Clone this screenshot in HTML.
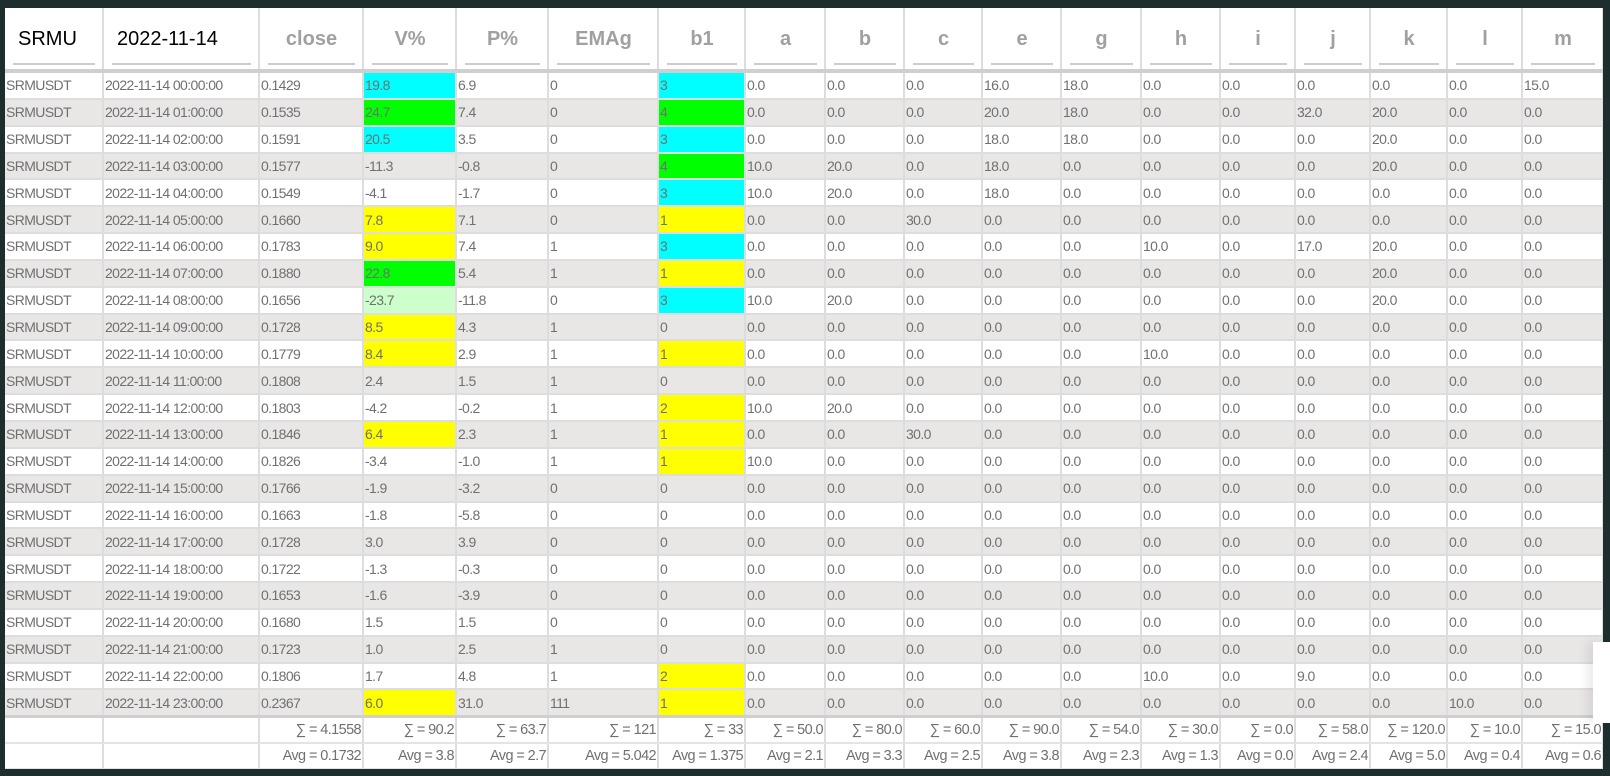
<!DOCTYPE html>
<html><head><meta charset="utf-8"><style>
body{margin:0;background:#1e2e2f;width:1610px;height:776px;overflow:hidden;font-family:"Liberation Sans",sans-serif}
.wrap{position:absolute;left:5px;top:8px;width:1598px;height:761px;background:#fff;overflow:hidden}
table{border-collapse:collapse;table-layout:fixed;width:1598px}
td,th{padding:0 0 0 1px;white-space:nowrap;overflow:hidden;border-right:2px solid #ddd;font-size:14px;color:#707070;letter-spacing:-0.6px;text-align:left}
thead th{height:61px;font-size:20px;font-weight:bold;color:#a0a0a0;text-align:center;position:relative;border-bottom:4px solid #cfcfcf;letter-spacing:0;vertical-align:top}
thead th span{display:block;margin:0 7px;padding-top:20px;height:35px;border-bottom:2px solid #ccc}
thead th.k{color:#000;text-align:left;font-weight:normal}
thead th.k span{padding-left:5px}
tbody td{height:24.85px;border-bottom:2px solid #ddd}
tbody tr:nth-child(even) td{background:#e9e6e6}
td.cy{background:#0ff!important}td.gr{background:#0f0!important}td.lg{background:#cfc!important}td.y{background:#ff0!important}
tbody tr:last-child td{border-bottom:3px solid #cfcfcf}
tfoot td{height:24px;text-align:right;border-bottom:2px solid #e4e4e4;padding-right:1px;font-size:14.5px}
.ov{position:absolute;left:1593px;top:642px;width:17px;height:81px;background:#fff;box-shadow:-6px 0 10px rgba(0,0,0,0.08)}
</style></head><body><div class="wrap"><table>
<colgroup><col style="width:98px"><col style="width:156px"><col style="width:104px"><col style="width:93px"><col style="width:92px"><col style="width:110px"><col style="width:87px"><col style="width:80px"><col style="width:79px"><col style="width:78px"><col style="width:79px"><col style="width:80px"><col style="width:79px"><col style="width:75px"><col style="width:75px"><col style="width:77px"><col style="width:75px"><col style="width:81px"></colgroup>
<thead><tr><th class="k"><span>SRMU</span></th><th class="k"><span>2022-11-14</span></th><th><span>close</span></th><th><span>V%</span></th><th><span>P%</span></th><th><span>EMAg</span></th><th><span>b1</span></th><th><span>a</span></th><th><span>b</span></th><th><span>c</span></th><th><span>e</span></th><th><span>g</span></th><th><span>h</span></th><th><span>i</span></th><th><span>j</span></th><th><span>k</span></th><th><span>l</span></th><th><span>m</span></th></tr></thead>
<tbody>
<tr><td>SRMUSDT</td><td>2022-11-14 00:00:00</td><td>0.1429</td><td class="cy">19.8</td><td>6.9</td><td>0</td><td class="cy">3</td><td>0.0</td><td>0.0</td><td>0.0</td><td>16.0</td><td>18.0</td><td>0.0</td><td>0.0</td><td>0.0</td><td>0.0</td><td>0.0</td><td>15.0</td></tr>
<tr><td>SRMUSDT</td><td>2022-11-14 01:00:00</td><td>0.1535</td><td class="gr">24.7</td><td>7.4</td><td>0</td><td class="gr">4</td><td>0.0</td><td>0.0</td><td>0.0</td><td>20.0</td><td>18.0</td><td>0.0</td><td>0.0</td><td>32.0</td><td>20.0</td><td>0.0</td><td>0.0</td></tr>
<tr><td>SRMUSDT</td><td>2022-11-14 02:00:00</td><td>0.1591</td><td class="cy">20.5</td><td>3.5</td><td>0</td><td class="cy">3</td><td>0.0</td><td>0.0</td><td>0.0</td><td>18.0</td><td>18.0</td><td>0.0</td><td>0.0</td><td>0.0</td><td>20.0</td><td>0.0</td><td>0.0</td></tr>
<tr><td>SRMUSDT</td><td>2022-11-14 03:00:00</td><td>0.1577</td><td>-11.3</td><td>-0.8</td><td>0</td><td class="gr">4</td><td>10.0</td><td>20.0</td><td>0.0</td><td>18.0</td><td>0.0</td><td>0.0</td><td>0.0</td><td>0.0</td><td>20.0</td><td>0.0</td><td>0.0</td></tr>
<tr><td>SRMUSDT</td><td>2022-11-14 04:00:00</td><td>0.1549</td><td>-4.1</td><td>-1.7</td><td>0</td><td class="cy">3</td><td>10.0</td><td>20.0</td><td>0.0</td><td>18.0</td><td>0.0</td><td>0.0</td><td>0.0</td><td>0.0</td><td>0.0</td><td>0.0</td><td>0.0</td></tr>
<tr><td>SRMUSDT</td><td>2022-11-14 05:00:00</td><td>0.1660</td><td class="y">7.8</td><td>7.1</td><td>0</td><td class="y">1</td><td>0.0</td><td>0.0</td><td>30.0</td><td>0.0</td><td>0.0</td><td>0.0</td><td>0.0</td><td>0.0</td><td>0.0</td><td>0.0</td><td>0.0</td></tr>
<tr><td>SRMUSDT</td><td>2022-11-14 06:00:00</td><td>0.1783</td><td class="y">9.0</td><td>7.4</td><td>1</td><td class="cy">3</td><td>0.0</td><td>0.0</td><td>0.0</td><td>0.0</td><td>0.0</td><td>10.0</td><td>0.0</td><td>17.0</td><td>20.0</td><td>0.0</td><td>0.0</td></tr>
<tr><td>SRMUSDT</td><td>2022-11-14 07:00:00</td><td>0.1880</td><td class="gr">22.8</td><td>5.4</td><td>1</td><td class="y">1</td><td>0.0</td><td>0.0</td><td>0.0</td><td>0.0</td><td>0.0</td><td>0.0</td><td>0.0</td><td>0.0</td><td>20.0</td><td>0.0</td><td>0.0</td></tr>
<tr><td>SRMUSDT</td><td>2022-11-14 08:00:00</td><td>0.1656</td><td class="lg">-23.7</td><td>-11.8</td><td>0</td><td class="cy">3</td><td>10.0</td><td>20.0</td><td>0.0</td><td>0.0</td><td>0.0</td><td>0.0</td><td>0.0</td><td>0.0</td><td>20.0</td><td>0.0</td><td>0.0</td></tr>
<tr><td>SRMUSDT</td><td>2022-11-14 09:00:00</td><td>0.1728</td><td class="y">8.5</td><td>4.3</td><td>1</td><td>0</td><td>0.0</td><td>0.0</td><td>0.0</td><td>0.0</td><td>0.0</td><td>0.0</td><td>0.0</td><td>0.0</td><td>0.0</td><td>0.0</td><td>0.0</td></tr>
<tr><td>SRMUSDT</td><td>2022-11-14 10:00:00</td><td>0.1779</td><td class="y">8.4</td><td>2.9</td><td>1</td><td class="y">1</td><td>0.0</td><td>0.0</td><td>0.0</td><td>0.0</td><td>0.0</td><td>10.0</td><td>0.0</td><td>0.0</td><td>0.0</td><td>0.0</td><td>0.0</td></tr>
<tr><td>SRMUSDT</td><td>2022-11-14 11:00:00</td><td>0.1808</td><td>2.4</td><td>1.5</td><td>1</td><td>0</td><td>0.0</td><td>0.0</td><td>0.0</td><td>0.0</td><td>0.0</td><td>0.0</td><td>0.0</td><td>0.0</td><td>0.0</td><td>0.0</td><td>0.0</td></tr>
<tr><td>SRMUSDT</td><td>2022-11-14 12:00:00</td><td>0.1803</td><td>-4.2</td><td>-0.2</td><td>1</td><td class="y">2</td><td>10.0</td><td>20.0</td><td>0.0</td><td>0.0</td><td>0.0</td><td>0.0</td><td>0.0</td><td>0.0</td><td>0.0</td><td>0.0</td><td>0.0</td></tr>
<tr><td>SRMUSDT</td><td>2022-11-14 13:00:00</td><td>0.1846</td><td class="y">6.4</td><td>2.3</td><td>1</td><td class="y">1</td><td>0.0</td><td>0.0</td><td>30.0</td><td>0.0</td><td>0.0</td><td>0.0</td><td>0.0</td><td>0.0</td><td>0.0</td><td>0.0</td><td>0.0</td></tr>
<tr><td>SRMUSDT</td><td>2022-11-14 14:00:00</td><td>0.1826</td><td>-3.4</td><td>-1.0</td><td>1</td><td class="y">1</td><td>10.0</td><td>0.0</td><td>0.0</td><td>0.0</td><td>0.0</td><td>0.0</td><td>0.0</td><td>0.0</td><td>0.0</td><td>0.0</td><td>0.0</td></tr>
<tr><td>SRMUSDT</td><td>2022-11-14 15:00:00</td><td>0.1766</td><td>-1.9</td><td>-3.2</td><td>0</td><td>0</td><td>0.0</td><td>0.0</td><td>0.0</td><td>0.0</td><td>0.0</td><td>0.0</td><td>0.0</td><td>0.0</td><td>0.0</td><td>0.0</td><td>0.0</td></tr>
<tr><td>SRMUSDT</td><td>2022-11-14 16:00:00</td><td>0.1663</td><td>-1.8</td><td>-5.8</td><td>0</td><td>0</td><td>0.0</td><td>0.0</td><td>0.0</td><td>0.0</td><td>0.0</td><td>0.0</td><td>0.0</td><td>0.0</td><td>0.0</td><td>0.0</td><td>0.0</td></tr>
<tr><td>SRMUSDT</td><td>2022-11-14 17:00:00</td><td>0.1728</td><td>3.0</td><td>3.9</td><td>0</td><td>0</td><td>0.0</td><td>0.0</td><td>0.0</td><td>0.0</td><td>0.0</td><td>0.0</td><td>0.0</td><td>0.0</td><td>0.0</td><td>0.0</td><td>0.0</td></tr>
<tr><td>SRMUSDT</td><td>2022-11-14 18:00:00</td><td>0.1722</td><td>-1.3</td><td>-0.3</td><td>0</td><td>0</td><td>0.0</td><td>0.0</td><td>0.0</td><td>0.0</td><td>0.0</td><td>0.0</td><td>0.0</td><td>0.0</td><td>0.0</td><td>0.0</td><td>0.0</td></tr>
<tr><td>SRMUSDT</td><td>2022-11-14 19:00:00</td><td>0.1653</td><td>-1.6</td><td>-3.9</td><td>0</td><td>0</td><td>0.0</td><td>0.0</td><td>0.0</td><td>0.0</td><td>0.0</td><td>0.0</td><td>0.0</td><td>0.0</td><td>0.0</td><td>0.0</td><td>0.0</td></tr>
<tr><td>SRMUSDT</td><td>2022-11-14 20:00:00</td><td>0.1680</td><td>1.5</td><td>1.5</td><td>0</td><td>0</td><td>0.0</td><td>0.0</td><td>0.0</td><td>0.0</td><td>0.0</td><td>0.0</td><td>0.0</td><td>0.0</td><td>0.0</td><td>0.0</td><td>0.0</td></tr>
<tr><td>SRMUSDT</td><td>2022-11-14 21:00:00</td><td>0.1723</td><td>1.0</td><td>2.5</td><td>1</td><td>0</td><td>0.0</td><td>0.0</td><td>0.0</td><td>0.0</td><td>0.0</td><td>0.0</td><td>0.0</td><td>0.0</td><td>0.0</td><td>0.0</td><td>0.0</td></tr>
<tr><td>SRMUSDT</td><td>2022-11-14 22:00:00</td><td>0.1806</td><td>1.7</td><td>4.8</td><td>1</td><td class="y">2</td><td>0.0</td><td>0.0</td><td>0.0</td><td>0.0</td><td>0.0</td><td>10.0</td><td>0.0</td><td>9.0</td><td>0.0</td><td>0.0</td><td>0.0</td></tr>
<tr><td>SRMUSDT</td><td>2022-11-14 23:00:00</td><td>0.2367</td><td class="y">6.0</td><td>31.0</td><td>111</td><td class="y">1</td><td>0.0</td><td>0.0</td><td>0.0</td><td>0.0</td><td>0.0</td><td>0.0</td><td>0.0</td><td>0.0</td><td>0.0</td><td>10.0</td><td>0.0</td></tr>
</tbody>
<tfoot>
<tr><td></td><td></td><td>∑ = 4.1558</td><td>∑ = 90.2</td><td>∑ = 63.7</td><td>∑ = 121</td><td>∑ = 33</td><td>∑ = 50.0</td><td>∑ = 80.0</td><td>∑ = 60.0</td><td>∑ = 90.0</td><td>∑ = 54.0</td><td>∑ = 30.0</td><td>∑ = 0.0</td><td>∑ = 58.0</td><td>∑ = 120.0</td><td>∑ = 10.0</td><td>∑ = 15.0</td></tr>
<tr><td></td><td></td><td>Avg = 0.1732</td><td>Avg = 3.8</td><td>Avg = 2.7</td><td>Avg = 5.042</td><td>Avg = 1.375</td><td>Avg = 2.1</td><td>Avg = 3.3</td><td>Avg = 2.5</td><td>Avg = 3.8</td><td>Avg = 2.3</td><td>Avg = 1.3</td><td>Avg = 0.0</td><td>Avg = 2.4</td><td>Avg = 5.0</td><td>Avg = 0.4</td><td>Avg = 0.6</td></tr>
</tfoot></table></div>
<div class="ov"></div>
</body></html>
